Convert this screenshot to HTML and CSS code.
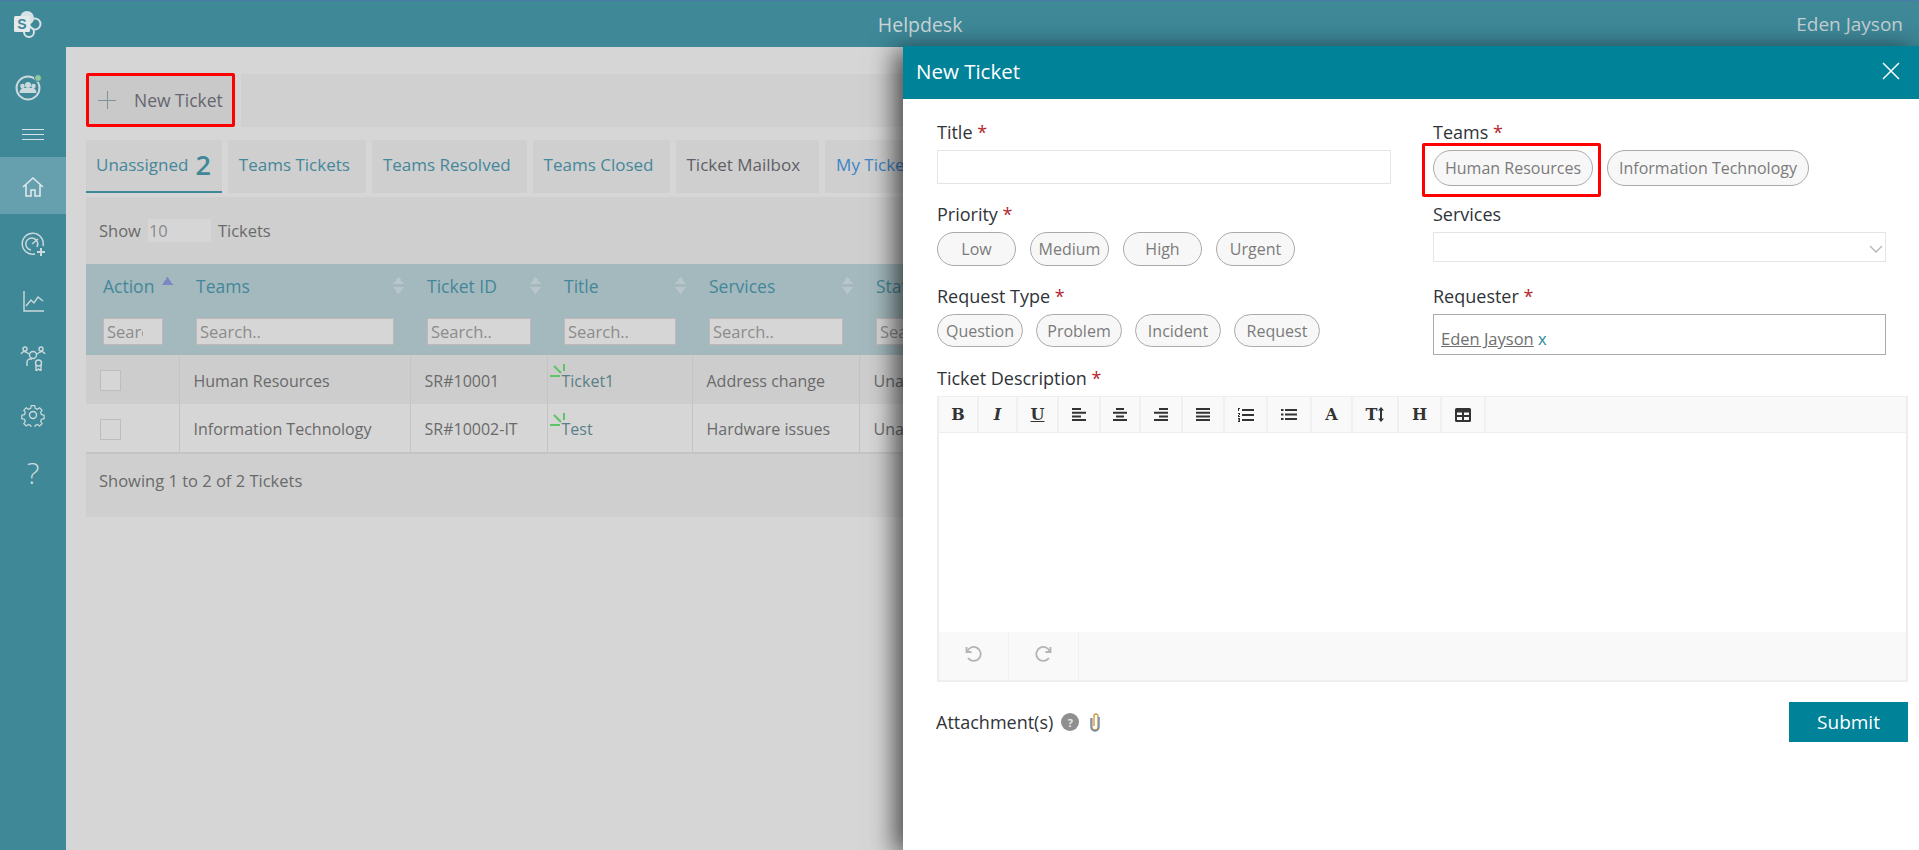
FILE: index.html
```html
<!DOCTYPE html>
<html lang="en">
<head>
  <meta charset="UTF-8">
  <title>Helpdesk</title>
  <link rel="stylesheet" href="styles.css">
</head>
<body>
  <header class="topbar">
    <svg class="logo" width="34" height="30" viewBox="0 0 34 30">
      <circle cx="17" cy="9" r="7" fill="#d6e2e5"/>
      <circle cx="25" cy="15" r="5.500" fill="none" stroke="#d6e2e5" stroke-width="2"/>
      <circle cx="19" cy="23" r="5" fill="none" stroke="#d6e2e5" stroke-width="2"/>
      <rect x="4" y="7" width="16" height="16" rx="1.500" fill="#e4eaec"/>
      <text x="12" y="20" class="logo-s">S</text>
    </svg>
    <div class="app-name">Helpdesk</div>
    <div class="user-name">Eden Jayson</div>
  </header>

  <div class="layout">
    <nav class="sidebar">
      <div class="side-team">
        <svg width="30" height="30" viewBox="0 0 30 30">
          <circle cx="14" cy="16" r="11.500" fill="none" stroke="#ccd9dc" stroke-width="2"/>
          <circle cx="14" cy="13" r="3" fill="#ccd9dc"/>
          <circle cx="8.500" cy="14" r="2.300" fill="#ccd9dc"/>
          <circle cx="19.500" cy="14" r="2.300" fill="#ccd9dc"/>
          <path d="M5.500 21c0-3 2-5 3.500-5h10c1.500 0 3.500 2 3.500 5z" fill="#ccd9dc"/>
          <circle cx="24" cy="6" r="3.500" fill="#8fc7a0" stroke="#3e8898"/>
        </svg>
      </div>
      <div class="side-burger"><span></span><span></span><span></span></div>
      <a class="side-item active">
        <svg width="24" height="24" viewBox="0 0 24 24" fill="none" stroke="#dfe8ea" stroke-width="1.600"><path d="M2 12 12 3l10 9M5 10v11h5v-6h4v6h5V10"/></svg>
      </a>
      <a class="side-item">
        <svg width="26" height="26" viewBox="0 0 26 26" fill="none" stroke="#ccd9dc" stroke-width="1.500"><path d="M15 23a10.500 10.500 0 1 1 8-8"/><path d="M17 16a6 6 0 1 0-6 3"/><path d="m12 13 6-5"/><path d="M21 17v8M17 21h8" stroke-width="2"/></svg>
      </a>
      <a class="side-item">
        <svg width="24" height="24" viewBox="0 0 24 24" fill="none" stroke="#ccd9dc" stroke-width="1.400"><path d="M3 2v20h20"/><path d="m5 17 5-6 3 3 4-6 5 4"/></svg>
      </a>
      <a class="side-item">
        <svg width="26" height="26" viewBox="0 0 26 26" fill="none" stroke="#ccd9dc" stroke-width="1.400"><circle cx="5" cy="4" r="2"/><circle cx="21" cy="4" r="2"/><circle cx="13" cy="10" r="3.500"/><path d="M1 9c1-2 3-3 5-2l3 2M25 9c-1-2-3-3-5-2l-3 2M7 21v-4c0-2 2-3 3-3h2"/><circle cx="18.500" cy="18" r="3"/><path d="M16 20v6l2.500-2 2.500 2v-6"/></svg>
      </a>
      <a class="side-item">
        <svg width="24" height="24" viewBox="0 0 24 24" fill="none" stroke="#ccd9dc" stroke-width="1.400"><circle cx="12" cy="12" r="3.500"/><path d="M10 1.500h4l.6 3 2.400 1 2.600-1.700 2.800 2.800-1.700 2.600 1 2.400 3 .6v4l-3 .6-1 2.400 1.700 2.600-2.800 2.800-2.600-1.700-2.400 1-.6 3h-4l-.6-3-2.400-1-2.600 1.700-2.800-2.800 1.700-2.600-1-2.400-3-.6v-4l3-.6 1-2.400-1.700-2.600 2.800-2.800L7 5.500l2.400-1z" transform="translate(1.400 1.400) scale(.88)"/></svg>
      </a>
      <a class="side-item help">?</a>
    </nav>

    <main class="content">
      <div class="toolbar">
        <button class="new-ticket"><span class="plus"></span>New Ticket</button>
        <div class="toolbar-rest"></div>
      </div>

      <div class="tabs">
        <a class="tab active">Unassigned <b>2</b></a>
        <a class="tab">Teams Tickets</a>
        <a class="tab">Teams Resolved</a>
        <a class="tab">Teams Closed</a>
        <a class="tab dark">Ticket Mailbox</a>
        <a class="tab blue">My Tickets</a>
      </div>

      <section class="tickets">
        <div class="show-row">Show <input class="show-input" value="10"> Tickets</div>
        <table class="ticket-table">
          <thead>
            <tr class="head-row">
              <th class="c-action">Action<i class="sort up"></i></th>
              <th class="c-teams">Teams<i class="sort"></i></th>
              <th class="c-id">Ticket ID<i class="sort"></i></th>
              <th class="c-title">Title<i class="sort"></i></th>
              <th class="c-services">Services<i class="sort"></i></th>
              <th class="c-status">Status<i class="sort"></i></th>
            </tr>
            <tr class="filter-row">
              <th><input class="filter" placeholder="Search.."></th>
              <th><input class="filter" placeholder="Search.."></th>
              <th><input class="filter" placeholder="Search.."></th>
              <th><input class="filter" placeholder="Search.."></th>
              <th><input class="filter" placeholder="Search.."></th>
              <th><input class="filter" placeholder="Search.."></th>
            </tr>
          </thead>
          <tbody>
            <tr>
              <td><span class="check"></span></td>
              <td>Human Resources</td>
              <td>SR#10001</td>
              <td class="title-cell"><svg class="new-mark" width="16" height="15" viewBox="0 0 16 15" stroke="#5fc465" stroke-width="2"><path d="M0 13h10M4 3l7 7M14 1v7"/></svg>Ticket1</td>
              <td>Address change</td>
              <td>Unassigned</td>
            </tr>
            <tr>
              <td><span class="check"></span></td>
              <td>Information Technology</td>
              <td>SR#10002-IT</td>
              <td class="title-cell"><svg class="new-mark" width="16" height="15" viewBox="0 0 16 15" stroke="#5fc465" stroke-width="2"><path d="M0 13h10M4 3l7 7M14 1v7"/></svg>Test</td>
              <td>Hardware issues</td>
              <td>Unassigned</td>
            </tr>
          </tbody>
        </table>
        <div class="table-foot">Showing 1 to 2 of 2 Tickets</div>
      </section>
    </main>
  </div>

  <aside class="panel">
    <div class="panel-head">
      <span>New Ticket</span>
      <svg width="18" height="18" viewBox="0 0 18 18" stroke="#fff" stroke-width="1.500"><path d="M1 1l16 16M17 1 1 17"/></svg>
    </div>
    <form class="panel-body">
      <div class="form-grid">
        <div class="field">
          <label>Title <em>*</em></label>
          <input class="text-input">
        </div>
        <div class="field">
          <label>Teams <em>*</em></label>
          <div class="pills">
            <span class="pill team-pill marked">Human Resources</span>
            <span class="pill team-pill">Information Technology</span>
          </div>
        </div>
        <div class="field">
          <label>Priority <em>*</em></label>
          <div class="pills">
            <span class="pill prio">Low</span>
            <span class="pill prio">Medium</span>
            <span class="pill prio">High</span>
            <span class="pill prio">Urgent</span>
          </div>
        </div>
        <div class="field">
          <label>Services</label>
          <div class="select-box">
            <svg width="14" height="8" viewBox="0 0 14 8" fill="none" stroke="#b5b5b5" stroke-width="1.300"><path d="m1 1 6 6 6-6"/></svg>
          </div>
        </div>
        <div class="field">
          <label>Request Type <em>*</em></label>
          <div class="pills">
            <span class="pill req">Question</span>
            <span class="pill req">Problem</span>
            <span class="pill req">Incident</span>
            <span class="pill req">Request</span>
          </div>
        </div>
        <div class="field">
          <label>Requester <em>*</em></label>
          <div class="people-box"><a class="person">Eden Jayson</a> <span class="remove">x</span></div>
        </div>
      </div>

      <label class="desc-label">Ticket Description <em>*</em></label>
      <div class="editor">
        <div class="editor-tools">
          <span class="tool glyph b" style="width:40px">B</span>
          <span class="tool glyph i" style="width:39px">I</span>
          <span class="tool glyph u" style="width:41px">U</span>
          <span class="tool" style="width:42px"><svg width="14" height="13" viewBox="0 0 14 13" fill="#333"><path d="M0 0h9v2H0zM0 3.700h14v2H0zM0 7.400h9v2H0zM0 11h14v2H0z"/></svg></span>
          <span class="tool" style="width:40px"><svg width="14" height="13" viewBox="0 0 14 13" fill="#333"><path d="M3 0h8v2H3zM0 3.700h14v2H0zM3 7.400h8v2H3zM0 11h14v2H0z"/></svg></span>
          <span class="tool" style="width:42px"><svg width="14" height="13" viewBox="0 0 14 13" fill="#333"><path d="M5 0h9v2H5zM0 3.700h14v2H0zM5 7.400h9v2H5zM0 11h14v2H0z"/></svg></span>
          <span class="tool" style="width:42px"><svg width="14" height="13" viewBox="0 0 14 13" fill="#333"><path d="M0 0h14v2H0zM0 3.700h14v2H0zM0 7.400h14v2H0zM0 11h14v2H0z"/></svg></span>
          <span class="tool" style="width:43px"><svg width="16" height="14" viewBox="0 0 16 14" fill="#333"><path d="M4 1h12v2H4zM4 6h12v2H4zM4 11h12v2H4zM0 0h2v1H1v2H0zM0 5h2v2H1v1h1v1H0V7h1V6H0zM0 10h2v4H0v-1h1v-.5H0v-1h1V11H0z"/></svg></span>
          <span class="tool" style="width:44px"><svg width="16" height="13" viewBox="0 0 16 13" fill="#333"><path d="M4 1h12v2H4zM4 5.500h12v2H4zM4 10h12v2H4zM0 1h2.500v2H0zM0 5.500h2.500v2H0zM0 10h2.500v2H0z"/></svg></span>
          <span class="tool glyph" style="width:41px">A</span>
          <span class="tool glyph" style="width:46px">T<svg width="6" height="15" viewBox="0 0 6 15" fill="#333"><path d="M3 0l3 3.500H4v8h2L3 15l-3-3.500h2v-8H0z"/></svg></span>
          <span class="tool glyph" style="width:43px">H</span>
          <span class="tool" style="width:44px"><svg width="16" height="14" viewBox="0 0 16 14" fill="#333"><path fill-rule="evenodd" d="M1.500 0h13A1.500 1.500 0 0 1 16 1.500v11a1.500 1.500 0 0 1-1.500 1.500h-13A1.500 1.500 0 0 1 0 12.500v-11A1.500 1.500 0 0 1 1.500 0zM2 4.500v2.500h5V4.500zm7 0v2.500h5V4.500zM2 9v3h5V9zm7 0v3h5V9z"/></svg></span>
        </div>
        <div class="editor-area"></div>
        <div class="editor-foot">
          <span class="foot-btn"><svg width="17" height="17" viewBox="0 0 17 17" fill="none" stroke="#b4b4b4" stroke-width="1.800"><path d="M1.500 2v5h5"/><path d="M2 7a7 7 0 1 1 1 6"/></svg></span>
          <span class="foot-btn"><svg width="17" height="17" viewBox="0 0 17 17" fill="none" stroke="#b4b4b4" stroke-width="1.800"><path d="M15.500 2v5h-5"/><path d="M15 7a7 7 0 1 0-1 6"/></svg></span>
        </div>
      </div>

      <div class="form-foot">
        <div class="attach">
          Attachment(s)
          <span class="hint">?</span>
          <svg class="clip" width="12" height="20" viewBox="0 0 12 20" fill="none" stroke-width="1.300"><path stroke="#c79545" d="M3 6v9a3 3 0 0 0 6 0V4a2 2 0 0 0-4 0v10"/><path stroke="#5a7fa8" d="M2 6v9a4 4 0 0 0 8 0V5"/></svg>
        </div>
        <button type="button" class="submit">Submit</button>
      </div>
    </form>
  </aside>
</body>
</html>
```

FILE: styles.css
```css
* {
  box-sizing: border-box;
}
html, body {
  height: 100%;
}
body {
  margin: 0;
  font-family: "Open Sans", "Noto Sans", sans-serif;
  font-size: 16px;
  color: #6a6a6a;
  background: #d6d6d6;
  overflow: hidden;
  display: flex;
  flex-direction: column;
}
.topbar {
  height: 47px;
  flex: none;
  background: #3e8898;
  border-top: 1px solid #4a7aa8;
  display: flex;
  align-items: center;
  justify-content: space-between;
  padding: 0 16px 0 10px;
  color: #c4cfd2;
  font-size: 19px;
}
.logo-s {
  font: bold 14px "Liberation Sans", sans-serif;
  fill: #3e8898;
  text-anchor: middle;
}
.app-name {
  color: #c9d6d9;
  font-size: 19.500px;
}
.layout {
  flex: 1;
  display: flex;
  min-height: 0;
}
.sidebar {
  width: 66px;
  flex: none;
  background: #3e8898;
  display: flex;
  flex-direction: column;
}
.side-team {
  height: 58px;
  padding: 25px 0 0 14px;
}
.side-burger {
  height: 52px;
  padding-top: 24px;
  display: flex;
  flex-direction: column;
  align-items: center;
  gap: 4px;
}
.side-burger span {
  width: 22px;
  height: 1px;
  background: #d6e2e5;
  margin-left: -1px;
}
.side-item {
  height: 57px;
  padding-top: 3px;
  display: flex;
  align-items: center;
  justify-content: center;
}
.side-item.active {
  background: #66a0ae;
}
.help {
  color: #ccd9dc;
  font-size: 30px;
  font-weight: 300;
}
.content {
  flex: 1;
  min-width: 0;
  padding: 26px 20px 0;
}
.toolbar {
  display: flex;
  gap: 6px;
  height: 54px;
}
.new-ticket {
  width: 149px;
  border: 3px solid #f00;
  border-radius: 2px;
  background: #c9c9c9;
  color: #66666f;
  font: inherit;
  font-size: 17.500px;
  padding: 0 0 0 9px;
  display: flex;
  align-items: center;
}
.plus {
  width: 18px;
  height: 18px;
  margin-right: 18px;
  background:
    linear-gradient(#7f9499, #7f9499) center / 100% 1px no-repeat,
    linear-gradient(#7f9499, #7f9499) center / 1px 100% no-repeat;
}
.toolbar-rest {
  flex: 1;
  background: #d0d0d0;
  margin-top: 1px;
}
.tabs {
  display: flex;
  gap: 6px;
  margin-top: 13px;
  height: 53px;
}
.tab {
  background: #cfcfcf;
  border-radius: 2px 2px 0 0;
  color: #45879a;
  font-size: 17px;
  padding: 0 16px 4px 11px;
  display: flex;
  align-items: center;
  gap: 7px;
  white-space: nowrap;
}
.tab b {
  font-size: 27px;
  font-weight: 600;
  line-height: 1;
  color: #3e8898;
}
.tab.active {
  border-bottom: 2px solid #3e8898;
  padding: 0 11px 2px 10px;
}
.tab.dark {
  color: #5f5f66;
  padding-right: 19px;
}
.tab.blue {
  color: #3c84c6;
}
.tickets {
  margin-top: 4px;
  background: #cfcfcf;
  height: 320px;
}
.show-row {
  height: 67px;
  padding: 0 13px;
  display: flex;
  align-items: center;
  gap: 7px;
  font-size: 16.500px;
}
.show-input {
  width: 63px;
  height: 23px;
  border: 0;
  background: #d6d6d6;
  color: #8a8a8a;
  font: inherit;
  padding: 0 1px;
}
.ticket-table {
  border-collapse: collapse;
  table-layout: fixed;
  width: 100%;
  font-size: 16px;
}
.ticket-table th {
  background: #a3b9bd;
  font-weight: 400;
  text-align: left;
  color: #45879a;
  padding: 0 16px 0 17px;
}
.head-row th {
  height: 54px;
  padding-bottom: 10px;
  position: relative;
  font-size: 17.500px;
}
.filter-row th {
  height: 37px;
  vertical-align: top;
}
.c-action { width: 93px; }
.c-teams { width: 231px; }
.c-id { width: 137px; }
.c-title { width: 145px; }
.c-services { width: 167px; }
.sort {
  position: absolute;
  right: 6px;
  top: 12px;
  width: 11px;
  height: 19px;
  background:
    linear-gradient(to top left, #b9c6c9 50%, transparent 50%) 0 0 / 6px 8px no-repeat,
    linear-gradient(to top right, #b9c6c9 50%, transparent 50%) 5px 0 / 6px 8px no-repeat,
    linear-gradient(to bottom left, #b9c6c9 50%, transparent 50%) 0 11px / 6px 8px no-repeat,
    linear-gradient(to bottom right, #b9c6c9 50%, transparent 50%) 5px 11px / 6px 8px no-repeat;
}
.sort.up {
  right: auto;
  left: 76px;
  background:
    linear-gradient(to top left, #7c87c4 50%, transparent 50%) 0 0 / 6px 9px no-repeat,
    linear-gradient(to top right, #7c87c4 50%, transparent 50%) 5px 0 / 6px 9px no-repeat;
}
.filter {
  width: 100%;
  height: 27px;
  border: 1px solid #c0b8b8;
  background: #d6d6d6;
  font: inherit;
  font-size: 16.500px;
  padding: 0 3px;
  display: block;
}
.filter-row th:first-child .filter {
  padding-right: 19px;
}
.filter::placeholder {
  color: #8c8c8c;
}
.ticket-table td {
  height: 49px;
  padding: 2px 14px 0;
  border-left: 1px solid #c4c4c4;
  white-space: nowrap;
  overflow: hidden;
}
.ticket-table td:first-child {
  border-left: 0;
}
.ticket-table tbody tr:nth-child(odd) {
  background: #cdcdcd;
}
.ticket-table tbody tr:nth-child(even) {
  background: #d6d6d6;
}
.ticket-table tbody tr:last-child {
  border-bottom: 2px solid #c4c4c4;
}
.check {
  display: block;
  width: 21px;
  height: 21px;
  border: 1px solid #bdbdbd;
  background: #d6d6d6;
}
.title-cell {
  position: relative;
  color: #5a7f88;
}
.new-mark {
  position: absolute;
  left: 2px;
  top: 8px;
}
.table-foot {
  padding: 15px 13px;
  font-size: 16.500px;
}
.panel {
  position: absolute;
  top: 46px;
  left: 903px;
  right: 0;
  bottom: 0;
  background: #fff;
  box-shadow: -8px 4px 24px rgba(0, 0, 0, 0.65);
  color: #2f3438;
}
.panel-head {
  height: 53px;
  background: #008299;
  color: #fff;
  font-size: 20.500px;
  padding: 0 19px 3px 13px;
  display: flex;
  align-items: center;
  justify-content: space-between;
}
.panel-body {
  padding: 24px 11px 0 34px;
}
.form-grid {
  display: grid;
  grid-template-columns: 454px 453px;
  column-gap: 42px;
}
.field {
  height: 82px;
}
.field label, .desc-label {
  display: block;
  font-size: 18px;
  line-height: 18px;
  margin-bottom: 9px;
  color: #2f3438;
}
em {
  color: #b3262e;
  font-style: normal;
}
.text-input {
  display: block;
  width: 100%;
  height: 34px;
  border: 1px solid #e4e4e4;
}
.pills {
  display: flex;
  gap: 14px;
}
.pill {
  height: 34px;
  border: 1px solid #aaa;
  border-radius: 18px;
  background: #f7f7f7;
  color: #7b7b7b;
  font-size: 16px;
  display: flex;
  align-items: center;
  justify-content: center;
  white-space: nowrap;
}
.prio {
  width: 79px;
}
.req {
  width: 86px;
  height: 33px;
  margin-right: -1px;
}
.team-pill {
  height: 36px;
  padding: 0 11px;
  position: relative;
}
.team-pill.marked::after {
  content: "";
  position: absolute;
  left: -12px;
  top: -8px;
  right: -9px;
  bottom: -12px;
  border: 3px solid #f00;
  border-radius: 2px;
}
.select-box {
  height: 30px;
  border: 1px solid #e4e4e4;
  display: flex;
  align-items: center;
  justify-content: flex-end;
  padding: 4px 2px 0 0;
}
.people-box {
  height: 41px;
  border: 1px solid #aaa;
  padding: 13px 7px 0;
  font-size: 16.500px;
  line-height: 22px;
}
.person {
  color: #6f6f6f;
  text-decoration: underline;
}
.remove {
  color: #2b8a99;
}
.editor {
  border: 2px solid #eee;
  border-top-width: 1px;
}
.editor-tools {
  height: 36px;
  background: #f9f9f9;
  border-bottom: 1px solid #eee;
  display: flex;
}
.tool {
  border-right: 2px solid #f0f0f0;
  display: flex;
  align-items: center;
  justify-content: center;
}
.glyph {
  font-family: "DejaVu Serif", serif;
  font-weight: 700;
  font-size: 16px;
  color: #333;
  gap: 1px;
}
.glyph.i {
  font-style: italic;
}
.glyph.u {
  text-decoration: underline;
}
.editor-area {
  height: 199px;
}
.editor-foot {
  height: 48px;
  background: #f9f9f9;
  display: flex;
}
.foot-btn {
  width: 70px;
  border-right: 1px solid #f2f2f2;
  padding-bottom: 6px;
  display: flex;
  align-items: center;
  justify-content: center;
}
.form-foot {
  margin-top: 20px;
  display: flex;
  justify-content: space-between;
  align-items: center;
}
.attach {
  display: flex;
  align-items: center;
  gap: 8px;
  font-size: 18px;
  margin-left: -1px;
}
.clip {
  margin-left: 2px;
}
.hint {
  width: 18px;
  height: 18px;
  border-radius: 50%;
  background: #8f8f8f;
  color: #e8e8e8;
  font-size: 11px;
  font-weight: 700;
  display: flex;
  align-items: center;
  justify-content: center;
}
.submit {
  width: 119px;
  height: 40px;
  border: 0;
  background: #008299;
  color: #fff;
  font: inherit;
  font-size: 19px;
}
```
